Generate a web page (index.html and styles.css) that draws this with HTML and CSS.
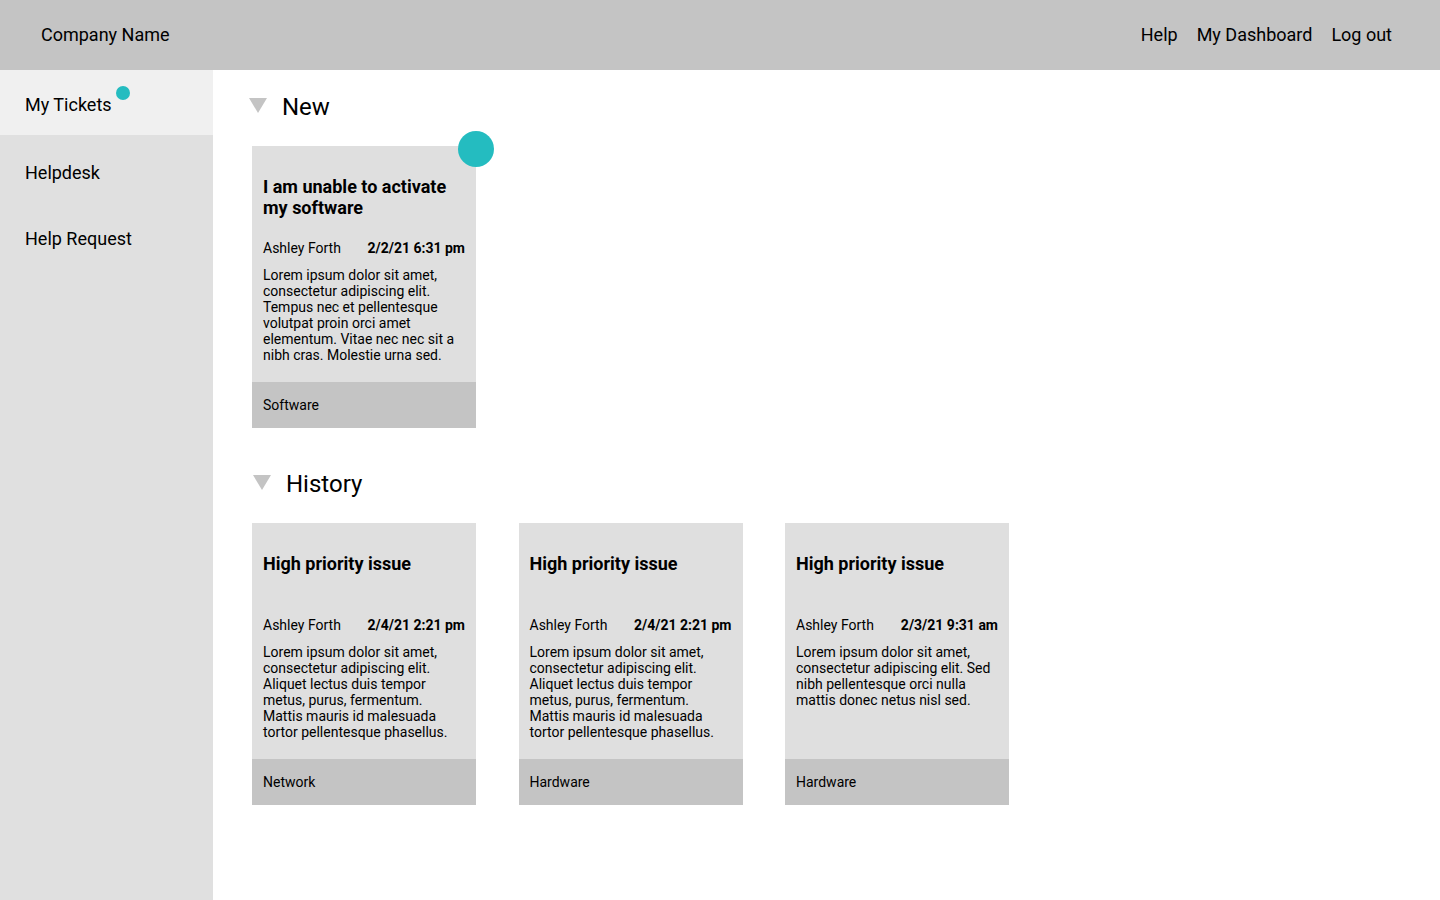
FILE: index.html
```html
<!DOCTYPE html>
<html lang="en">
<head>
<meta charset="utf-8">
<title>My Tickets</title>
<link rel="stylesheet" href="styles.css">
</head>
<body>
<header class="topbar">
  <div class="brand">Company Name</div>
  <nav class="topnav">
    <a href="#">Help</a>
    <a href="#">My Dashboard</a>
    <a href="#">Log out</a>
  </nav>
</header>
<div class="layout">
  <aside class="sidebar">
    <a class="side-item active" href="#"><span class="side-label">My Tickets<span class="dot"></span></span></a>
    <a class="side-item" href="#"><span class="side-label">Helpdesk</span></a>
    <a class="side-item" href="#"><span class="side-label">Help Request</span></a>
  </aside>
  <main class="content">
    <section class="section section-new">
      <h2 class="section-title"><span class="caret"></span>New</h2>
      <div class="cards">
        <article class="card">
          <span class="badge"></span>
          <div class="card-body">
            <h3 class="card-title">I am unable to activate my software</h3>
            <div class="meta"><span>Ashley Forth</span><strong>2/2/21 6:31 pm</strong></div>
            <p class="desc">Lorem ipsum dolor sit amet, consectetur adipiscing elit. Tempus nec et pellentesque volutpat proin orci amet elementum. Vitae nec nec sit a nibh cras. Molestie urna sed.</p>
          </div>
          <div class="card-foot">Software</div>
        </article>
      </div>
    </section>
    <section class="section section-history">
      <h2 class="section-title"><span class="caret"></span>History</h2>
      <div class="cards">
        <article class="card">
          <div class="card-body">
            <h3 class="card-title">High priority issue</h3>
            <div class="meta"><span>Ashley Forth</span><strong>2/4/21 2:21 pm</strong></div>
            <p class="desc">Lorem ipsum dolor sit amet, consectetur adipiscing elit. Aliquet lectus duis tempor metus, purus, fermentum. Mattis mauris id malesuada tortor pellentesque phasellus.</p>
          </div>
          <div class="card-foot">Network</div>
        </article>
        <article class="card">
          <div class="card-body">
            <h3 class="card-title">High priority issue</h3>
            <div class="meta"><span>Ashley Forth</span><strong>2/4/21 2:21 pm</strong></div>
            <p class="desc">Lorem ipsum dolor sit amet, consectetur adipiscing elit. Aliquet lectus duis tempor metus, purus, fermentum. Mattis mauris id malesuada tortor pellentesque phasellus.</p>
          </div>
          <div class="card-foot">Hardware</div>
        </article>
        <article class="card">
          <div class="card-body">
            <h3 class="card-title">High priority issue</h3>
            <div class="meta"><span>Ashley Forth</span><strong>2/3/21 9:31 am</strong></div>
            <p class="desc">Lorem ipsum dolor sit amet, consectetur adipiscing elit. Sed nibh pellentesque orci nulla mattis donec netus nisl sed.</p>
          </div>
          <div class="card-foot">Hardware</div>
        </article>
      </div>
    </section>
  </main>
</div>
</body>
</html>
```

FILE: styles.css
```css
* { box-sizing: border-box; }
html, body { margin: 0; padding: 0; height: 100%; }
body {
  font-family: Roboto, "Liberation Sans", Arial, sans-serif;
  color: #000;
  background: #fff;
  display: flex;
  flex-direction: column;
  height: 900px;
  overflow: hidden;
}
a { color: inherit; text-decoration: none; }

.topbar {
  height: 70px;
  flex: none;
  background: #c4c4c4;
  display: flex;
  align-items: center;
  justify-content: space-between;
  padding: 0 48px 1px 41px;
  font-size: 18px;
  line-height: 21px;
}
.topnav { display: flex; gap: 19px; }

.layout { flex: 1; display: flex; min-height: 0; }

.sidebar {
  width: 213px;
  flex: none;
  background: #e0e0e0;
  display: flex;
  flex-direction: column;
}
.side-item {
  height: 66px;
  display: flex;
  align-items: center;
  padding-left: 25px;
  font-size: 18px;
  line-height: 21px;
}
.side-item.active {
  height: 65px;
  margin-bottom: 4px;
  padding-top: 3px;
  background: #f0f0f0;
}
.side-label { position: relative; }
.dot {
  position: absolute;
  left: calc(100% + 4px);
  top: -8px;
  width: 14px;
  height: 14px;
  border-radius: 50%;
  background: #24bcc0;
}

.content {
  flex: 1;
  padding: 23px 0 0 39px;
}
.section-title {
  margin: 0;
  height: 28px;
  display: flex;
  align-items: center;
  font-size: 24px;
  line-height: 28px;
  font-weight: 400;
}
.caret {
  width: 0;
  height: 0;
  border-left: 9px solid transparent;
  border-right: 9px solid transparent;
  border-top: 15px solid #c4c4c4;
  margin-top: -4px;
  margin-right: 15px;
}
.section-new .section-title { margin-left: -3px; }
.section-history { margin-top: 42px; }
.section-history .section-title { margin-left: 1px; }

.cards {
  display: flex;
  gap: 41px;
  margin-top: 25px;
}
.section-history .cards { margin-top: 25px; gap: 42.5px; }

.card {
  position: relative;
  width: 224px;
  height: 282px;
  display: flex;
  flex-direction: column;
  background: #dfdfdf;
}
.badge {
  position: absolute;
  right: -18px;
  top: -15px;
  width: 36px;
  height: 36px;
  border-radius: 50%;
  background: #24bcc0;
}
.card-body {
  flex: 1;
  padding: 30px 11px 0;
}
.card-title {
  margin: 0;
  height: 42px;
  font-size: 18px;
  line-height: 21px;
  font-weight: 700;
}
.meta {
  margin-top: 22px;
  display: flex;
  justify-content: space-between;
  font-size: 14px;
  line-height: 16px;
}
.meta strong { font-weight: 700; }
.desc {
  margin: 11px 0 0;
  font-size: 14px;
  line-height: 16px;
}
.card-foot {
  height: 46px;
  flex: none;
  background: #c4c4c4;
  padding: 0 11px;
  font-size: 14px;
  line-height: 46px;
}
```
